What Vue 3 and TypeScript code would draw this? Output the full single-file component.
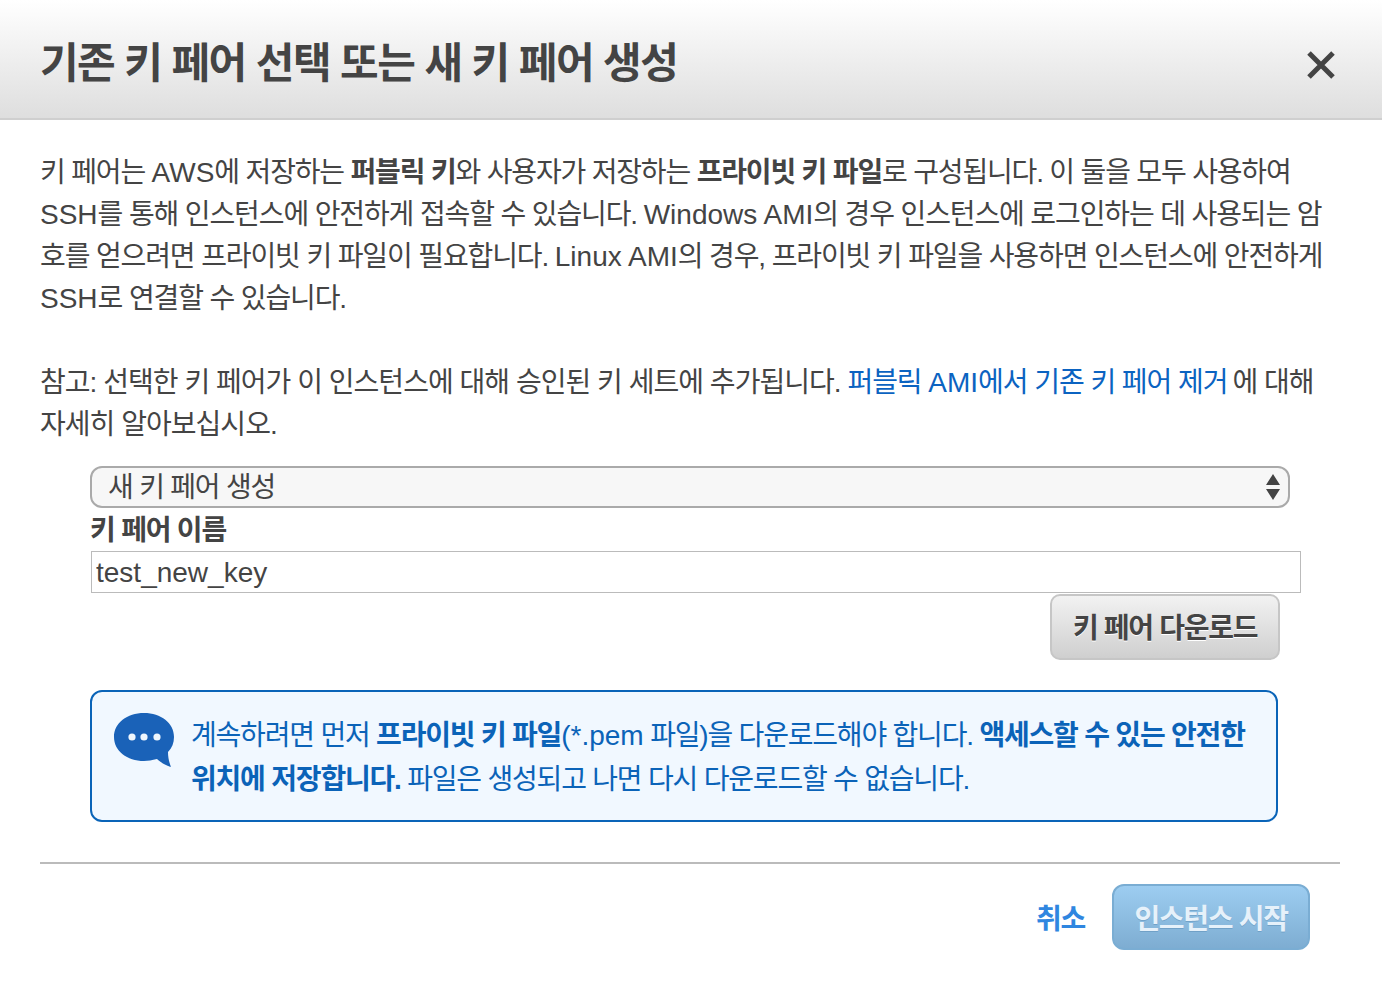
<script setup lang="ts">
const title = "기존 키 페어 선택 또는 새 키 페어 생성";
const keyName = "test_new_key";
</script>

<template>
  <div class="dialog">
    <header class="dialog-header">
      <h1>{{ title }}</h1>
      <button class="close-button" aria-label="close">
        <svg width="30" height="30" viewBox="0 0 30 30">
          <path d="M3 3 L27 27 M27 3 L3 27" stroke="#444" stroke-width="5" fill="none" stroke-linecap="butt" />
        </svg>
      </button>
    </header>

    <div class="dialog-body">
      <p class="intro">
        키 페어는 <span class="en">AWS</span>에 저장하는 <b>퍼블릭 키</b>와 사용자가 저장하는 <b>프라이빗 키 파일</b>로 구성됩니다. 이 둘을 모두 사용하여<br />
        <span class="en">SSH</span>를 통해 인스턴스에 안전하게 접속할 수 있습니다. <span class="en">Windows AMI</span>의 경우 인스턴스에 로그인하는 데 사용되는 암<br />
        호를 얻으려면 프라이빗 키 파일이 필요합니다. <span class="en">Linux AMI</span>의 경우, 프라이빗 키 파일을 사용하면 인스턴스에 안전하게<br />
        <span class="en">SSH</span>로 연결할 수 있습니다.
      </p>
      <p class="note">
        참고: 선택한 키 페어가 이 인스턴스에 대해 승인된 키 세트에 추가됩니다. <a href="#">퍼블릭 <span class="en">AMI</span>에서 기존 키 페어 제거</a><span class="after-link">에 대해</span><br />
        자세히 알아보십시오.
      </p>

      <div class="form">
        <div class="select">
          <span>새 키 페어 생성</span>
          <svg width="16" height="28" viewBox="0 0 16 28">
            <path d="M8 1 L15 12 H1 Z M1 16 H15 L8 27 Z" fill="#444" />
          </svg>
        </div>
        <label class="field-label">키 페어 이름</label>
        <input class="name-input" :value="keyName" />
        <div class="download-row">
          <button class="grey-button">키 페어 다운로드</button>
        </div>
      </div>

      <div class="info-box">
        <svg class="info-icon" width="62" height="56" viewBox="0 0 62 56">
          <path d="M31 1 C48 1 61 11 61 25 C61 31 59 36 55 40 C55 45 56 50 58 55 C52 53 47 50 44 47 C39 48 35 49 31 49 C14 49 1 39 1 25 C1 11 14 1 31 1 Z" fill="#1a62b8" />
          <circle cx="19" cy="25" r="3.6" fill="#eef6fd" />
          <circle cx="31" cy="25" r="3.6" fill="#eef6fd" />
          <circle cx="44" cy="25" r="3.6" fill="#eef6fd" />
        </svg>
        <p>
          계속하려면 먼저 <b>프라이빗 키 파일</b><span class="en">(*.pem</span> 파일)을 다운로드해야 합니다. <b>액세스할 수 있는 안전한</b><br />
          <b>위치에 저장합니다.</b> 파일은 생성되고 나면 다시 다운로드할 수 없습니다.
        </p>
      </div>
    </div>

    <footer class="dialog-footer">
      <a class="cancel" href="#">취소</a>
      <button class="blue-button">인스턴스 시작</button>
    </footer>
  </div>
</template>

<style>
html,
body {
  margin: 0;
  background: #fff;
}
</style>

<style scoped>
.dialog {
  width: 1382px;
  height: 982px;
  overflow: hidden;
  font-family: "Liberation Sans", "Noto Sans CJK KR", sans-serif;
  color: #444;
  font-size: 28px;
  line-height: 42px;
  letter-spacing: -1.2px;
}

.en {
  letter-spacing: 0;
}

.dialog-header {
  height: 118px;
  border-bottom: 2px solid #cfcfcf;
  background: linear-gradient(#fff, #dedede);
  display: flex;
  justify-content: space-between;
  align-items: center;
  padding: 0 46px 0 40px;
}

.dialog-header h1 {
  margin: 0;
  font-size: 42px;
  font-weight: 700;
  line-height: 50px;
  letter-spacing: -1.55px;
  position: relative;
  top: 5px;
}

.close-button {
  background: none;
  border: none;
  padding: 0;
  display: flex;
  margin-top: 12px;
}

.dialog-body {
  padding: 32px 40px 0;
}

.intro,
.note {
  margin: 0;
  white-space: nowrap;
}

.intro {
  letter-spacing: -1.12px;
}

.intro::first-line {
  letter-spacing: -1.17px;
}

.note {
  margin-top: 42px;
  letter-spacing: -0.97px;
}

.note a {
  color: #0b63c1;
  text-decoration: none;
  letter-spacing: -1.05px;
}

.after-link {
  margin-left: 5px;
}

.form {
  margin: 20px 0 0 50px;
}

.select {
  width: 1200px;
  height: 42px;
  box-sizing: border-box;
  border: 2px solid #aaa;
  border-radius: 12px;
  background: #f7f7f7;
  display: flex;
  justify-content: space-between;
  align-items: center;
  padding: 0 7px 0 16px;
  line-height: 38px;
}

.select span {
  padding-top: 1px;
}

.field-label {
  display: block;
  font-weight: 700;
  line-height: 43px;
  padding-top: 1px;
  height: 43px;
  box-sizing: border-box;
}

.name-input {
  display: block;
  width: 1210px;
  height: 42px;
  box-sizing: border-box;
  border: 1px solid #bbb;
  margin-left: 1px;
  padding: 2px 4px 0;
  font: inherit;
  letter-spacing: 0;
  color: #444;
  outline: none;
}

.download-row {
  display: flex;
  justify-content: flex-end;
  width: 1190px;
  margin-top: 1px;
}

.grey-button {
  width: 230px;
  height: 66px;
  border: 2px solid #c6c6c6;
  border-radius: 10px;
  background: linear-gradient(#f2f2f2, #cfcfcf);
  font: inherit;
  font-weight: 700;
  letter-spacing: -1.3px;
  color: #444;
  text-shadow: 0 1px 0 #fff;
  padding: 4px 0 0;
}

.info-box {
  margin: 30px 0 0 50px;
  width: 1188px;
  height: 132px;
  box-sizing: border-box;
  border: 2px solid #0a64b8;
  border-radius: 12px;
  background: #f1f8ff;
  display: flex;
  gap: 17px;
  padding: 20px 0 0 21px;
  color: #0b63b8;
}

.info-icon {
  flex: none;
}

.info-box p {
  margin: 2px 0 0 -1px;
  line-height: 44px;
  white-space: nowrap;
}

.dialog-footer {
  margin: 40px 42px 0 40px;
  border-top: 2px solid #bbb;
  display: flex;
  justify-content: flex-end;
  align-items: center;
  gap: 27px;
  padding: 20px 30px 0 0;
}

.cancel {
  color: #2f86e0;
  font-weight: 700;
  text-decoration: none;
  padding-top: 5px;
}

.blue-button {
  width: 198px;
  height: 66px;
  border: 2px solid #7aadd3;
  border-radius: 12px;
  background: linear-gradient(#9dcdf1, #7eadd2);
  font: inherit;
  font-weight: 700;
  letter-spacing: -1.3px;
  color: #e6f1fa;
  text-shadow: 0 1px 0 rgba(90, 140, 180, 0.5);
  padding: 5px 0 0;
}
</style>
